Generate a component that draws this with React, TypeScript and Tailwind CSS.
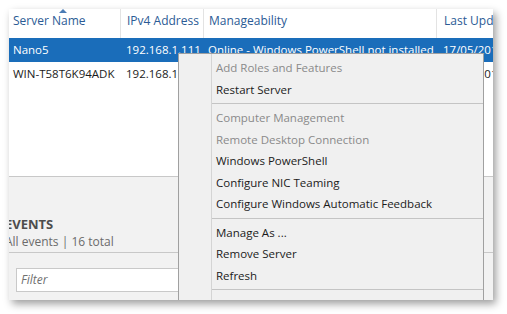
import React from "react";

const columns = [
  { label: "Server Name", width: "w-[111px]", pad: "pl-[4px]" },
  { label: "IPv4 Address", width: "w-[83px]", pad: "pl-[6px]" },
  { label: "Manageability", width: "w-[233px]", pad: "pl-[5px]" },
  { label: "Last Update", width: "w-[80px]", pad: "pl-[7px]" },
];

const rows = [
  ["Nano5", "192.168.1.111", "Online - Windows PowerShell not installed", "17/05/2016 10:42:17"],
  ["WIN-T58T6K94ADK", "192.168.1.112", "Online - Performance counters not started", "17/05/2016 10:42:18"],
];

type MenuEntry = { label: string; disabled?: boolean } | "sep";

const menu: MenuEntry[] = [
  { label: "Add Roles and Features", disabled: true },
  { label: "Restart Server" },
  "sep",
  { label: "Computer Management", disabled: true },
  { label: "Remote Desktop Connection", disabled: true },
  { label: "Windows PowerShell" },
  { label: "Configure NIC Teaming" },
  { label: "Configure Windows Automatic Feedback" },
  "sep",
  { label: "Manage As ..." },
  { label: "Remove Server" },
  { label: "Refresh" },
  "sep",
  { label: "Copy" },
];

const ContextMenu = () => (
  <div className="absolute left-[169px] top-[44px] w-[306px] h-[260px] bg-[#f0f0f0] border border-[#a0a0a0] pt-[3px]">
    <div className="absolute left-[32px] top-0 bottom-0 border-l border-[#d4d4d4]" />
    {menu.map((item, i) =>
      item === "sep" ? (
        <div key={i} className="h-[7px] flex items-center pl-[33px]">
          <div className="w-full border-t border-[#c4c4c4]" />
        </div>
      ) : (
        <div
          key={i}
          className={`h-[21.5px] flex items-center pl-[37px] text-[11.5px] ${
            item.disabled ? "text-[#8a8a8a]" : "text-[#1b1b1b]"
          }`}
        >
          {item.label}
        </div>
      )
    )}
  </div>
);

export default function App() {
  return (
    <div
      className="w-[507px] h-[314px] bg-white relative"
      style={{ fontFamily: '"Open Sans", "Noto Sans", sans-serif' }}
    >
      <div className="absolute left-[9px] top-[9px] w-[484px] h-[291px] overflow-hidden bg-[#f2f2f2] shadow-[3px_4px_8px_rgba(0,0,0,0.38)]">
        {/* server list */}
        <div className="h-[168px] bg-white border-b border-[#c8c8c8]">
          <div className="flex h-[29px] whitespace-nowrap">
            {columns.map((c, i) => (
              <div
                key={i}
                className={`${c.width} ${c.pad} shrink-0 relative pt-[3px] text-[12px] text-[#2b5b95] overflow-hidden ${
                  i > 0 ? "border-l border-[#e3e3e3]" : ""
                }`}
              >
                {i === 0 && (
                  <svg className="absolute left-[50px] top-[0px]" width="8" height="4" viewBox="0 0 8 4">
                    <polygon points="0,4 4,0 8,4" fill="#4a7cb5" />
                  </svg>
                )}
                {c.label}
              </div>
            ))}
          </div>
          {rows.map((r, ri) => (
            <div
              key={ri}
              className={`flex h-[24px] items-center whitespace-nowrap text-[11.5px] ${
                ri === 0 ? "bg-[#1a6dba] text-white" : "text-[#1b1b1b]"
              }`}
            >
              {r.map((cell, ci) => (
                <div key={ci} className={`${columns[ci].width} ${columns[ci].pad} shrink-0 overflow-hidden`}>
                  {cell}
                </div>
              ))}
            </div>
          ))}
        </div>

        {/* events */}
        <div className="h-[76px] border-b border-[#c8c8c8] flex flex-col justify-end pb-[1px] ml-[-4px]">
          <div className="text-[13px] font-bold text-[#4d4d4d] leading-[18px]">EVENTS</div>
          <div className="text-[12px] text-[#6b6b6b] leading-[18px]">All events | 16 total</div>
        </div>
        <div className="pt-[15px] pl-[7px]">
          <div className="w-[300px] h-[24px] bg-white border border-[#c9c9c9] flex items-center pl-[4px] text-[12px] italic text-[#707070]">
            Filter
          </div>
        </div>

        <ContextMenu />
      </div>
    </div>
  );
}
